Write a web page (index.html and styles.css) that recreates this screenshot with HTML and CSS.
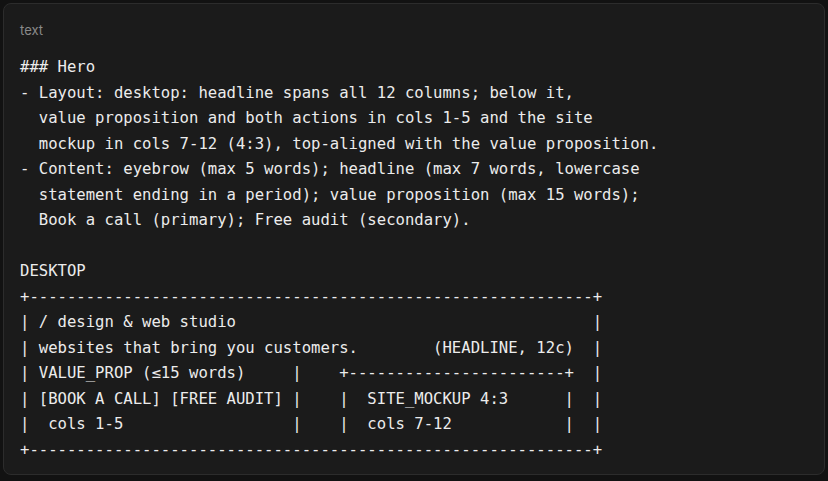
FILE: index.html
```html
<!DOCTYPE html>
<html>
<head>
<meta charset="utf-8">
<link rel="stylesheet" href="styles.css">
</head>
<body>
<div class="codeblock">
  <div class="lang">text</div>
<pre class="code">### Hero
- Layout: desktop: headline spans all 12 columns; below it,
  value proposition and both actions in cols 1-5 and the site
  mockup in cols 7-12 (4:3), top-aligned with the value proposition.
- Content: eyebrow (max 5 words); headline (max 7 words, lowercase
  statement ending in a period); value proposition (max 15 words);
  Book a call (primary); Free audit (secondary).

DESKTOP
+------------------------------------------------------------+
| / design &amp; web studio                                      |
| websites that bring you customers.        (HEADLINE, 12c)  |
| VALUE_PROP (≤15 words)     |    +-----------------------+  |
| [BOOK A CALL] [FREE AUDIT] |    |  SITE_MOCKUP 4:3      |  |
|  cols 1-5                  |    |  cols 7-12            |  |
+------------------------------------------------------------+</pre>
</div>
</body>
</html>
```
FILE: styles.css
```css
html, body {
  margin: 0;
  padding: 0;
  background: #121212;
}
body {
  padding: 3px;
  width: 822px;
}
.codeblock {
  background: #1b1b1b;
  border: 1px solid #2c2c2c;
  border-radius: 8px;
  height: 472px;
  box-sizing: border-box;
  padding: 16px 16px 0 16px;
}
.lang {
  font-family: Inter, "Noto Sans", sans-serif;
  font-size: 13px;
  line-height: 20px;
  color: #8a8a8a;
}
.code {
  margin: 15px 0 0 0;
  font-family: "DejaVu Sans Mono", monospace;
  font-size: 15.6px;
  line-height: 25.5px;
  color: #ececec;
  white-space: pre;
}
```
